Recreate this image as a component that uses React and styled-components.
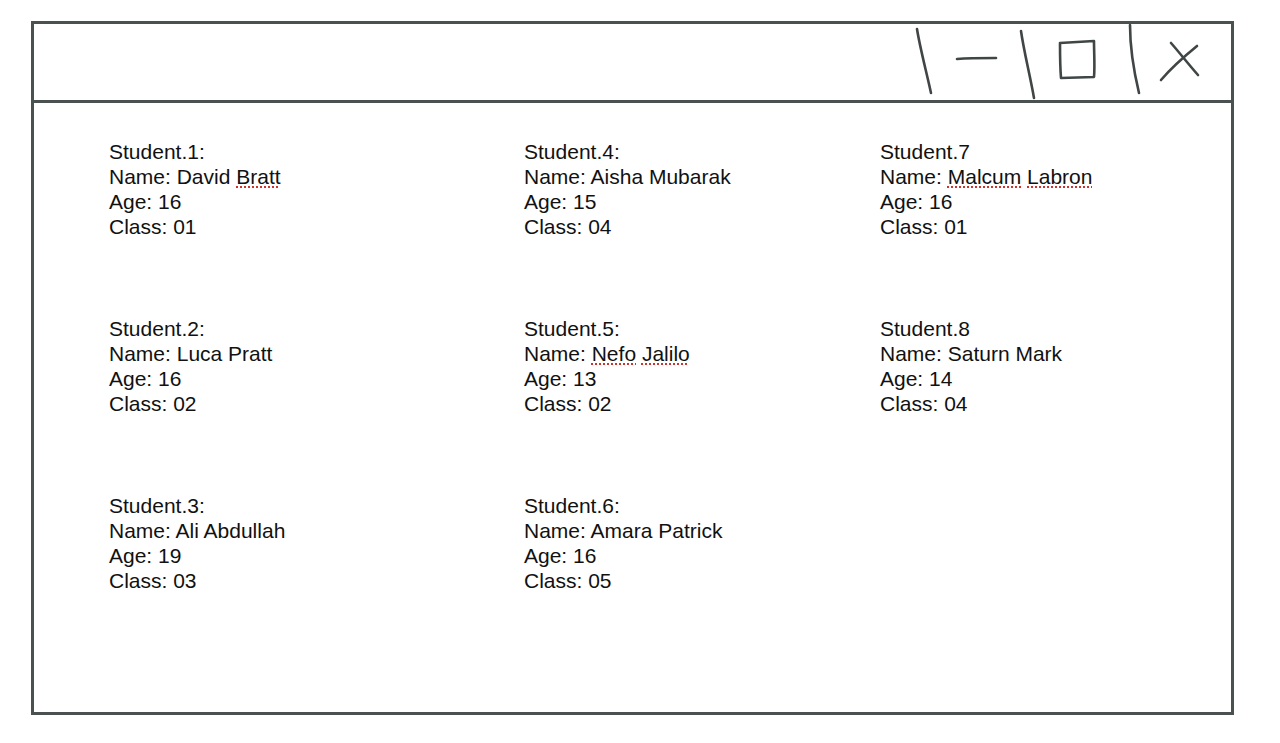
import React from "react";
import styled, { createGlobalStyle } from "styled-components";

const students = [
  { label: "Student.1:", name: [["David", false], ["Bratt", true]], age: "16", cls: "01" },
  { label: "Student.2:", name: [["Luca", false], ["Pratt", false]], age: "16", cls: "02" },
  { label: "Student.3:", name: [["Ali", false], ["Abdullah", false]], age: "19", cls: "03" },
  { label: "Student.4:", name: [["Aisha", false], ["Mubarak", false]], age: "15", cls: "04" },
  { label: "Student.5:", name: [["Nefo", true], ["Jalilo", true]], age: "13", cls: "02" },
  { label: "Student.6:", name: [["Amara", false], ["Patrick", false]], age: "16", cls: "05" },
  { label: "Student.7", name: [["Malcum", true], ["Labron", true]], age: "16", cls: "01" },
  { label: "Student.8", name: [["Saturn", false], ["Mark", false]], age: "14", cls: "04" },
];

const GlobalStyle = createGlobalStyle`
  html, body {
    margin: 0;
    padding: 0;
    background: #fff;
  }
  body {
    font-family: "Liberation Sans", Arial, sans-serif;
    color: #111;
  }
`;

const Window = styled.div`
  box-sizing: border-box;
  width: 1203px;
  height: 694px;
  margin: 21px 0 0 31px;
  border: 3px solid #4a5251;
  display: flex;
  flex-direction: column;
`;

const TitleBar = styled.div`
  height: 76px;
  border-bottom: 3px solid #4a5251;
  display: flex;
  justify-content: flex-end;
  align-items: stretch;
  padding-right: 25px;
`;

const Controls = styled.svg`
  display: block;
  width: 300px;
  height: 76px;
  overflow: visible;
`;

const Content = styled.div`
  flex: 1;
  padding: 36px 0 0 75px;
  display: grid;
  grid-template-columns: 415px 356px 1fr;
  grid-template-rows: repeat(3, auto);
  grid-auto-flow: column;
  row-gap: 77px;
  align-content: start;
`;

const Card = styled.div`
  display: flex;
  flex-direction: column;
`;

const Line = styled.div`
  font-size: 21px;
  line-height: 25px;
  white-space: nowrap;
`;

const Word = styled.span`
  text-decoration: ${(p) => (p.misspelled ? "underline dotted #d0312d" : "none")};
  text-decoration-thickness: 2px;
  text-underline-offset: 2px;
`;

const WindowControls = () => (
  <Controls viewBox="905 24 300 76">
    <g fill="none" stroke="#3f4645" strokeWidth="2.6" strokeLinecap="round" strokeLinejoin="round">
      <path d="M916 29 C919 48, 925 70, 930 93" />
      <path d="M956 59 C968 58, 983 58, 995 58" />
      <path d="M1020 31 C1023 52, 1029 75, 1033 98" />
      <path d="M1059 43 L1093 41 C1093 53, 1094 66, 1093 77 L1060 78 C1059 66, 1059 54, 1059 43 Z" />
      <path d="M1129 25 C1129 48, 1133 72, 1138 93" />
      <path d="M1170 43 C1178 52, 1188 65, 1197 75" />
      <path d="M1196 46 C1185 55, 1171 67, 1160 80" />
    </g>
  </Controls>
);

const StudentCard = ({ s }) => (
  <Card>
    <Line>{s.label}</Line>
    <Line>
      Name:{" "}
      {s.name.map(([w, bad], i) => (
        <React.Fragment key={w}>
          {i > 0 && " "}
          <Word misspelled={bad}>{w}</Word>
        </React.Fragment>
      ))}
    </Line>
    <Line>Age: {s.age}</Line>
    <Line>Class: {s.cls}</Line>
  </Card>
);

export default function App() {
  return (
    <>
      <GlobalStyle />
      <Window>
        <TitleBar>
          <WindowControls />
        </TitleBar>
        <Content>
          {students.map((s) => (
            <StudentCard key={s.label} s={s} />
          ))}
        </Content>
      </Window>
    </>
  );
}
